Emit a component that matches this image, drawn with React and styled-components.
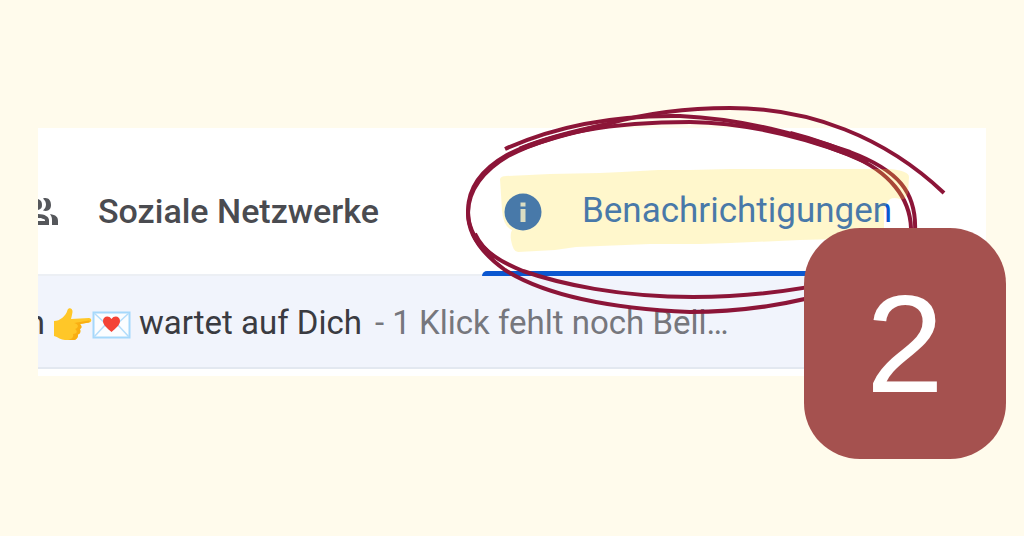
import React from "react";
import styled, { createGlobalStyle } from "styled-components";

const GlobalStyle = createGlobalStyle`
  *, *::before, *::after { box-sizing: border-box; }
  body {
    margin: 0;
    background: #fffbec;
    font-family: Roboto, "Liberation Sans", sans-serif;
  }
`;

const Page = styled.main`
  min-height: 100vh;
  padding: 128px 38px 160px;
  overflow: hidden;
`;

const Figure = styled.section`
  position: relative;
`;

const Inbox = styled.div`
  background: #ffffff;
  padding-bottom: 7px;
  overflow: hidden;
`;

const Tabs = styled.nav`
  display: flex;
  height: 148px;
  border-bottom: 2px solid #eceff4;
`;

const Tab = styled.button`
  position: relative;
  display: flex;
  align-items: center;
  flex: ${(p) => (p.$active ? "1 0 auto" : "0 0 444px")};
  gap: ${(p) => (p.$active ? "40px" : "38px")};
  padding: 22px 0 0 ${(p) => (p.$active ? "22px" : "0")};
  border: 0;
  background: none;
  color: ${(p) => (p.$active ? "#0b57d0" : "#4a4b50")};
  font-family: inherit;
  font-size: ${(p) => (p.$active ? "35px" : "34px")};
  font-weight: ${(p) => (p.$active ? 400 : 500)};
  line-height: 40px;
  text-align: left;
  white-space: nowrap;

  &::after {
    content: "";
    display: ${(p) => (p.$active ? "block" : "none")};
    position: absolute;
    left: 0;
    right: 0;
    bottom: -2px;
    height: 5px;
    border-radius: 6px 6px 0 0;
    background: #0b57d0;
  }
`;

const TabLabel = styled.span`
  padding-bottom: 2px;
`;

const MailRow = styled.a`
  display: flex;
  align-items: center;
  height: 93px;
  padding-top: 2px;
  border-bottom: 2px solid #e3e8f0;
  background: #f1f4fc;
  color: #3a3b41;
  font-size: 33px;
  line-height: 40px;
  text-decoration: none;
  white-space: nowrap;
`;

const CutText = styled.span`
  display: flex;
  justify-content: flex-end;
  width: 7px;
  margin-right: 8px;
  overflow: hidden;
`;

const Emojis = styled.span`
  display: flex;
  align-items: center;
  padding-top: 4px;
  margin-right: 8px;
`;

const Subject = styled.span`
  margin-right: 13px;
`;

const Snippet = styled.span`
  color: #76777d;
`;

const Marking = styled.svg`
  position: absolute;
  left: 412px;
  top: -38px;
  pointer-events: none;
`;

const StepBadge = styled.div`
  position: absolute;
  right: -20px;
  top: 100px;
  display: flex;
  align-items: center;
  justify-content: center;
  width: 202px;
  height: 231px;
  border-radius: 56px;
  background: #a5514f;
  color: #ffffff;
  font: 140px/160px "Liberation Sans", Arial, sans-serif;
`;

function PeopleIcon() {
  return (
    <svg width="22" height="30" viewBox="0 0 22 30" fill="#55575b" aria-hidden="true">
      <path d="M0 2 C3 3 4 5 4 8 S3 12 0 13Z" />
      <path d="M5 1.500C10 0 13 3 13 8C13 12.500 10 15 5 13.500C9 10 9 5 5 1.500Z" />
      <path fillRule="evenodd" d="M0 17C7 17 11 20 11 23V28H0ZM0 21V24H7V23C7 22 3 21 0 21Z" />
      <path d="M12 17C18 18 20 20 20 24V28H14V23C14 20 13 18.500 12 17Z" />
    </svg>
  );
}

function InfoIcon() {
  return (
    <svg width="38" height="38" viewBox="0 0 38 38" aria-hidden="true">
      <circle cx="19" cy="19" r="18.500" fill="#0b57d0" />
      <path d="M16.500 9.500H21.500V13.500H16.500ZM16.500 16H21.500V29H16.500Z" fill="#cfdcf2" />
    </svg>
  );
}

function PointingHand() {
  return (
    <svg width="39" height="38" viewBox="0 0 39 38" role="img" aria-label="Zeigende Hand">
      <path
        fill="#ffc728"
        d="M1 15C7 15 13 10 14.500 4C15.500 1 20 2 19.500 6C19 9 18.500 11 18 13L36 12C39 12 39 16.500 36 16.500L27 18C29 20 29 22 27 23C28 26 27 28 25 28.500C25.500 32 23 34 20 34H12C8 34 5 31 1 30Z"
      />
      <path
        fill="#f9ae12"
        d="M21 17L36 14.500C37 14.500 37 16 36 16.500L27 18C29 20 29 22 27 23C28 26 27 28 25 28.500C25 32 23 34 20 34H15C19 33 21 31 20 28C24 28 25 25 22 23C26 22 26 18 21 17Z"
      />
    </svg>
  );
}

function LoveLetter() {
  return (
    <svg width="39" height="38" viewBox="0 0 39 38" role="img" aria-label="Liebesbrief">
      <rect x="1.500" y="6.500" width="36" height="25" fill="#fbfdff" stroke="#a5d8fb" strokeWidth="2" />
      <path d="M2 7L19.500 23L37 7M2 31L14 18M37 31L25 18" fill="none" stroke="#b4ddfb" strokeWidth="1.500" />
      <path
        d="M19.500 26C15 22 11 19 11 15C11 10 17 9 19.500 13C22 9 28 10 28 15C28 19 24 22 19.500 26Z"
        fill="#f44336"
      />
    </svg>
  );
}

export default function App() {
  return (
    <>
      <GlobalStyle />
      <Page>
        <Figure>
          <Inbox>
            <Tabs>
              <Tab type="button">
                <PeopleIcon />
                <TabLabel>Soziale Netzwerke</TabLabel>
              </Tab>
              <Tab type="button" $active>
                <InfoIcon />
                <TabLabel>Benachrichtigungen</TabLabel>
              </Tab>
            </Tabs>
            <MailRow href="#">
              <CutText>n</CutText>
              <Emojis>
                <PointingHand />
                <LoveLetter />
              </Emojis>
              <Subject>wartet auf Dich</Subject>
              <Snippet>- 1 Klick fehlt noch Bell…</Snippet>
            </MailRow>
          </Inbox>
          <Marking width="510" height="240" viewBox="450 90 510 240" aria-hidden="true">
            <g fill="none" stroke="#8c1538" strokeWidth="4">
              <path d="M505 149C558 125 618 115 680 116C745 119 800 135 850 152C898 170 917 192 915 232C914 272 800 296 693 297C620 297 560 284 523 271C490 258 468 240 468 211C468 186 484 168 507 155C552 132 618 122 690 122" />
              <path d="M690 122C745 123 800 136 850 155C890 172 910 198 911 228C912 280 790 312 690 312C600 308 540 292 505 270C480 252 468 234 468 213C468 190 484 170 508 156C536 141 570 133 607 124C650 112 690 108 730 108C810 108 885 137 944 193" />
              <path d="M474 234Q480 247 494 258" strokeWidth="6" />
              <path d="M790 134Q826 143 868 162" strokeWidth="6" />
              <path d="M520 149Q556 135 606 125" strokeWidth="5" />
            </g>
            <path
              fill="#ffde34"
              fillOpacity="0.25"
              d="M500 179Q501 176 506 176L550 174L600 173L622 172L658 170L690 170L730 169L790 169L850 169L890 169Q909 171 909 177L908 193Q905 201 900 199Q890 196 887 203L884 210V236Q882 238 875 238L800 240L730 243L700 244L650 244L600 246L576 247L555 250L518 252Q513 252 511 240Q510 234 512 230Q503 226 502 210Z"
            />
          </Marking>
          <StepBadge>2</StepBadge>
        </Figure>
      </Page>
    </>
  );
}
